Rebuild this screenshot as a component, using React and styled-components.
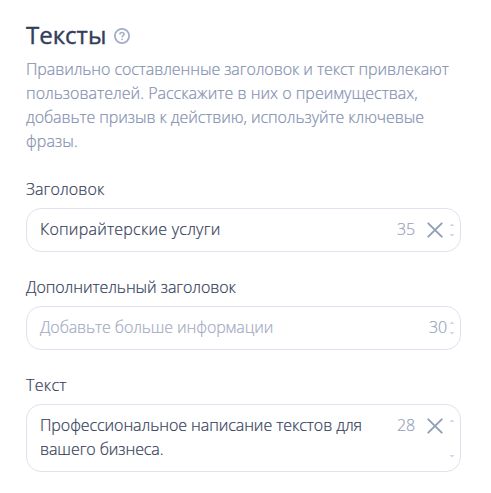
import React from "react";
import styled, { createGlobalStyle } from "styled-components";

const GlobalStyle = createGlobalStyle`
  * {
    box-sizing: border-box;
  }

  body {
    margin: 0;
    background-color: #fff;
    font-family: "Open Sans", "Noto Sans", sans-serif;
    font-size: 16px;
    font-weight: 300;
    line-height: 24px;
    color: #343e5a;
    -webkit-text-stroke: 0.2px;
  }
`;

const Page = styled.main`
  width: 491px;
  height: 493px;
  padding: 20px 30px 0 26px;
  overflow: hidden;
`;

const Header = styled.header`
  display: flex;
  align-items: center;
  gap: 8px;
  height: 32px;
`;

const Title = styled.h1`
  margin: 0;
  font-size: 24px;
  font-weight: 400;
  line-height: 30px;
  padding-bottom: 2px;
  -webkit-text-stroke: 0.4px;
`;

const HelpIcon = styled.svg`
  width: 16px;
  height: 16px;
  flex: none;
`;

const Description = styled.p`
  margin: 5px 0 24px;
  color: #8490b0;
`;

const Line = styled.span`
  display: block;
  width: max-content;
  white-space: nowrap;
  letter-spacing: ${(props) => props.$tracking || 0}px;
`;

const Field = styled.div`
  width: 435px;
  margin-bottom: 23px;
`;

const Label = styled.label`
  display: block;
  height: 24px;
  margin-bottom: 7px;
`;

const Control = styled.div`
  display: flex;
  min-height: 44px;
  padding: 8px 3px 10px 13px;
  border: 1px solid #dfe1ef;
  border-radius: 15px;
`;

const Value = styled.div`
  flex: 1;
  color: ${(props) => (props.$placeholder ? "#a3abc3" : "#343e5a")};
`;

const Counter = styled.span`
  color: #98a1bb;
  letter-spacing: -0.1px;
`;

const ClearIcon = styled.svg`
  width: 16px;
  height: 16px;
  margin: 5px 0 0 12px;
  flex: none;
`;

const Scroll = styled.div`
  display: flex;
  flex-direction: column;
  justify-content: space-between;
  width: 6px;
  margin: 6px 2px ${(props) => (props.$tall ? 3 : 4)}px
    ${(props) => (props.$clearable ? 6 : 2)}px;
`;

const Arrow = styled.svg`
  width: 6px;
  height: 3px;
  transform: ${(props) => (props.$down ? "rotate(180deg)" : "none")};
`;

const fields = [
  {
    label: "Заголовок",
    labelTracking: 0.1,
    lines: [{ text: "Копирайтерские услуги", tracking: 0.23 }],
    left: 35,
    clearable: true,
  },
  {
    label: "Дополнительный заголовок",
    labelTracking: -0.07,
    lines: [{ text: "Добавьте больше информации", tracking: -0.1 }],
    left: 30,
    placeholder: true,
  },
  {
    label: "Текст",
    labelTracking: 0.3,
    lines: [
      { text: "Профессиональное написание текстов для", tracking: -0.07 },
      { text: "вашего бизнеса.", tracking: -0.08 },
    ],
    left: 28,
    clearable: true,
  },
];

const description = [
  { text: "Правильно составленные заголовок и текст привлекают", tracking: -0.08 },
  { text: "пользователей. Расскажите в них о преимуществах,", tracking: 0.01 },
  { text: "добавьте призыв к действию, используйте ключевые", tracking: -0.08 },
  { text: "фразы.", tracking: 0.1 },
];

function ScrollArrow({ down }) {
  return (
    <Arrow $down={down} viewBox="0 0 6 3">
      <path d="M0.5 3L3 .4 5.5 3z" fill="#d3d7e4" />
    </Arrow>
  );
}

function TextField({ field }) {
  return (
    <Field>
      <Label>
        <Line $tracking={field.labelTracking}>{field.label}</Line>
      </Label>
      <Control>
        <Value $placeholder={field.placeholder}>
          {field.lines.map((line) => (
            <Line key={line.text} $tracking={line.tracking}>
              {line.text}
            </Line>
          ))}
        </Value>
        <Counter>{field.left}</Counter>
        {field.clearable && (
          <ClearIcon viewBox="0 0 16 16">
            <path
              d="M1.3 1.3l13.4 13.4M14.7 1.3L1.3 14.7"
              stroke="#929eb9"
              strokeWidth="1.9"
              strokeLinecap="round"
            />
          </ClearIcon>
        )}
        <Scroll $clearable={field.clearable} $tall={field.lines.length > 1}>
          <ScrollArrow />
          <ScrollArrow down />
        </Scroll>
      </Control>
    </Field>
  );
}

export default function App() {
  return (
    <Page>
      <GlobalStyle />
      <Header>
        <Title>Тексты</Title>
        <HelpIcon viewBox="0 0 16 16" fill="none" stroke="#a2adc6">
          <circle cx="8" cy="8" r="7.1" strokeWidth="1.8" />
          <path
            d="M5.9 6.5c0-1.2.8-2 2.1-2s2.1.7 2.1 1.8C10.1 7.6 8 7.7 8 9.3"
            strokeWidth="1.5"
          />
          <circle cx="8" cy="11.3" r=".9" fill="#a2adc6" stroke="none" />
        </HelpIcon>
      </Header>
      <Description>
        {description.map((line) => (
          <Line key={line.text} $tracking={line.tracking}>
            {line.text}
          </Line>
        ))}
      </Description>
      {fields.map((field) => (
        <TextField key={field.label} field={field} />
      ))}
    </Page>
  );
}
